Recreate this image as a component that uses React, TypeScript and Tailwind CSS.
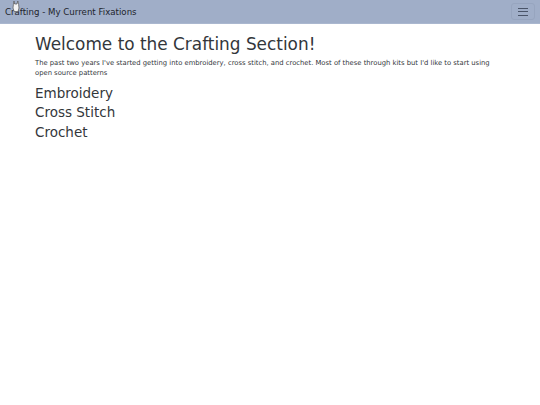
import React from 'react';

const sections = ['Embroidery', 'Cross Stitch', 'Crochet'];

export default function App() {
  return (
    <div className="min-h-[405px] bg-white text-[#33373b] font-['DejaVu_Sans',sans-serif]">
      {/* navbar */}
      <nav className="relative flex h-[24px] items-center justify-between bg-[#a0aec8] pl-[5px] pr-[5px] border-b border-[#aab7cf]">
        <span className="text-[8.65px] leading-none text-[#20242c] pt-[1px]">Crafting - My Current Fixations</span>
        <svg className="absolute left-[11px] top-[0px]" width="10" height="13" viewBox="0 0 10 13">
          <path d="M3 1 L3.6 4 L6 4 L6.8 1 L7.6 4.5 L8 8 L7 11.5 L3.2 11.5 L2 8 L2.4 4.5 Z" fill="#f4f4f4" stroke="#555" strokeWidth="0.7" />
        </svg>
        <button className="flex h-[17px] w-[24px] flex-col items-center justify-center gap-[2.5px] rounded-[3px] border border-[#97a5bf]">
          <span className="h-[1px] w-[10px] bg-[#4a5468]" />
          <span className="h-[1px] w-[10px] bg-[#4a5468]" />
          <span className="h-[1px] w-[10px] bg-[#4a5468]" />
        </button>
      </nav>

      {/* content */}
      <main className="px-[35px] pt-[10px]">
        <h1 className="text-[16.9px] leading-[20.25px] mb-[3.4px]">Welcome to the Crafting Section!</h1>
        <p className="text-[6.8px] leading-[10.125px] mb-[6.75px] w-[470px]">
          The past two years I've started getting into embroidery, cross stitch, and crochet. Most of these through kits but I'd like to start using open source patterns
        </p>
        {sections.map((s) => (
          <h3 key={s} className="text-[13.5px] leading-[16.2px] mb-[3.4px]">{s}</h3>
        ))}
      </main>
    </div>
  );
}
